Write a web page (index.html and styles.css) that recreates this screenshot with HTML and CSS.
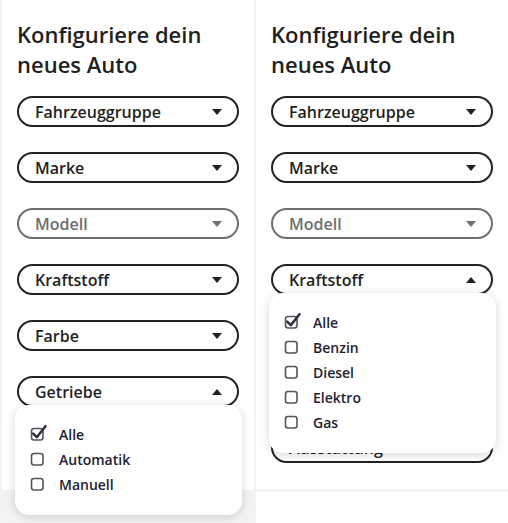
FILE: index.html
```html
<!DOCTYPE html>
<html lang="de">
<head>
<meta charset="utf-8">
<title>Konfigurator</title>
<link rel="stylesheet" href="styles.css">
</head>
<body>
<div class="page">
  <div class="col">
    <section class="card card-left">
      <h1 class="title">Konfiguriere dein neues Auto</h1>
      <div class="fields">
        <div class="select"><span>Fahrzeuggruppe</span><i class="caret"></i></div>
        <div class="select"><span>Marke</span><i class="caret"></i></div>
        <div class="select disabled"><span>Modell</span><i class="caret"></i></div>
        <div class="select"><span>Kraftstoff</span><i class="caret"></i></div>
        <div class="select"><span>Farbe</span><i class="caret"></i></div>
        <div class="select open"><span>Getriebe</span><i class="caret up"></i>
          <ul class="menu">
            <li class="item checked"><svg class="cb" viewBox="0 0 20 17" width="20" height="17"><rect x="1.5" y="4.5" width="11.5" height="11.5" rx="2.5" fill="none" stroke="#555" stroke-width="1.6"/><path d="M3.2 9.6 L6.8 13.2 L15.5 2.2" fill="none" stroke="#2e3440" stroke-width="2.6" stroke-linecap="round" stroke-linejoin="round"/></svg><span>Alle</span></li>
            <li class="item"><svg class="cb" viewBox="0 0 20 17" width="20" height="17"><rect x="1.5" y="4.5" width="11.5" height="11.5" rx="2.5" fill="none" stroke="#555" stroke-width="1.6"/></svg><span>Automatik</span></li>
            <li class="item"><svg class="cb" viewBox="0 0 20 17" width="20" height="17"><rect x="1.5" y="4.5" width="11.5" height="11.5" rx="2.5" fill="none" stroke="#555" stroke-width="1.6"/></svg><span>Manuell</span></li>
          </ul>
        </div>
        <div class="select covered"><span>Ausstattung</span><i class="caret"></i></div>
      </div>
    </section>
  </div>
  <div class="col">
    <section class="card card-right">
      <h1 class="title">Konfiguriere dein neues Auto</h1>
      <div class="fields">
        <div class="select"><span>Fahrzeuggruppe</span><i class="caret"></i></div>
        <div class="select"><span>Marke</span><i class="caret"></i></div>
        <div class="select disabled"><span>Modell</span><i class="caret"></i></div>
        <div class="select open"><span>Kraftstoff</span><i class="caret up"></i>
          <ul class="menu">
            <li class="item checked"><svg class="cb" viewBox="0 0 20 17" width="20" height="17"><rect x="1.5" y="4.5" width="11.5" height="11.5" rx="2.5" fill="none" stroke="#555" stroke-width="1.6"/><path d="M3.2 9.6 L6.8 13.2 L15.5 2.2" fill="none" stroke="#2e3440" stroke-width="2.6" stroke-linecap="round" stroke-linejoin="round"/></svg><span>Alle</span></li>
            <li class="item"><svg class="cb" viewBox="0 0 20 17" width="20" height="17"><rect x="1.5" y="4.5" width="11.5" height="11.5" rx="2.5" fill="none" stroke="#555" stroke-width="1.6"/></svg><span>Benzin</span></li>
            <li class="item"><svg class="cb" viewBox="0 0 20 17" width="20" height="17"><rect x="1.5" y="4.5" width="11.5" height="11.5" rx="2.5" fill="none" stroke="#555" stroke-width="1.6"/></svg><span>Diesel</span></li>
            <li class="item"><svg class="cb" viewBox="0 0 20 17" width="20" height="17"><rect x="1.5" y="4.5" width="11.5" height="11.5" rx="2.5" fill="none" stroke="#555" stroke-width="1.6"/></svg><span>Elektro</span></li>
            <li class="item"><svg class="cb" viewBox="0 0 20 17" width="20" height="17"><rect x="1.5" y="4.5" width="11.5" height="11.5" rx="2.5" fill="none" stroke="#555" stroke-width="1.6"/></svg><span>Gas</span></li>
          </ul>
        </div>
        <div class="select covered"><span>Farbe</span><i class="caret"></i></div>
        <div class="select covered"><span>Getriebe</span><i class="caret"></i></div>
        <div class="select"><span>Ausstattung</span><i class="caret"></i></div>
      </div>
    </section>
    <section class="card card-next"></section>
  </div>
</div>
</body>
</html>
```
FILE: styles.css
```css
* { box-sizing: border-box; }
html, body { margin: 0; padding: 0; }
body {
  background: #f3f3f3;
  font-family: "Open Sans", "Noto Sans", sans-serif;
  color: #222;
  width: 508px;
  height: 523px;
  overflow: hidden;
}
.page {
  display: grid;
  grid-template-columns: 252px 252px;
  column-gap: 2px;
  padding-left: 2px;
  height: 523px;
}
.col {
  display: flex;
  flex-direction: column;
  gap: 3px;
}
.card {
  background: #fff;
  padding: 19px 15px 0 15px;
}
.card-left { height: 490px; }
.card-right { height: 489px; }
.card-next { flex: 1; }
.title {
  margin: 0 0 17px 0;
  font-size: 22px;
  line-height: 30px;
  font-weight: 600;
  color: #1f1f1f;
  width: 205px;
}
.fields {
  display: flex;
  flex-direction: column;
  gap: 25px;
}
.select {
  position: relative;
  height: 31px;
  border: 2px solid #222;
  border-radius: 16px;
  display: flex;
  align-items: center;
  justify-content: space-between;
  padding: 0 15px 0 16px;
  font-size: 16px;
  font-weight: 600;
  color: #1f1f1f;
}
.select span { line-height: 20px; }
.select.covered > span { visibility: hidden; }
.select.disabled {
  border-color: #6e6e6e;
  color: #6e6e6e;
}
.caret {
  width: 0;
  height: 0;
  border-left: 5px solid transparent;
  border-right: 5px solid transparent;
  border-top: 6px solid #222;
}
.caret.up {
  border-top: 0;
  border-bottom: 6px solid #222;
}
.select.disabled .caret { border-top-color: #6e6e6e; }
.menu {
  position: absolute;
  top: 100%;
  left: -4px;
  right: -5px;
  margin: 0;
  list-style: none;
  background: #fff;
  border-radius: 14px;
  box-shadow: 0 2px 10px rgba(0, 0, 0, 0.16);
  padding: 17px 16px 18px 16px;
  z-index: 5;
}
.item {
  display: flex;
  align-items: center;
  height: 25px;
  font-size: 14px;
  font-weight: 600;
  color: #1e2233;
}
.cb {
  flex: none;
  margin: -5px 9px 0 -1px;
}
```
